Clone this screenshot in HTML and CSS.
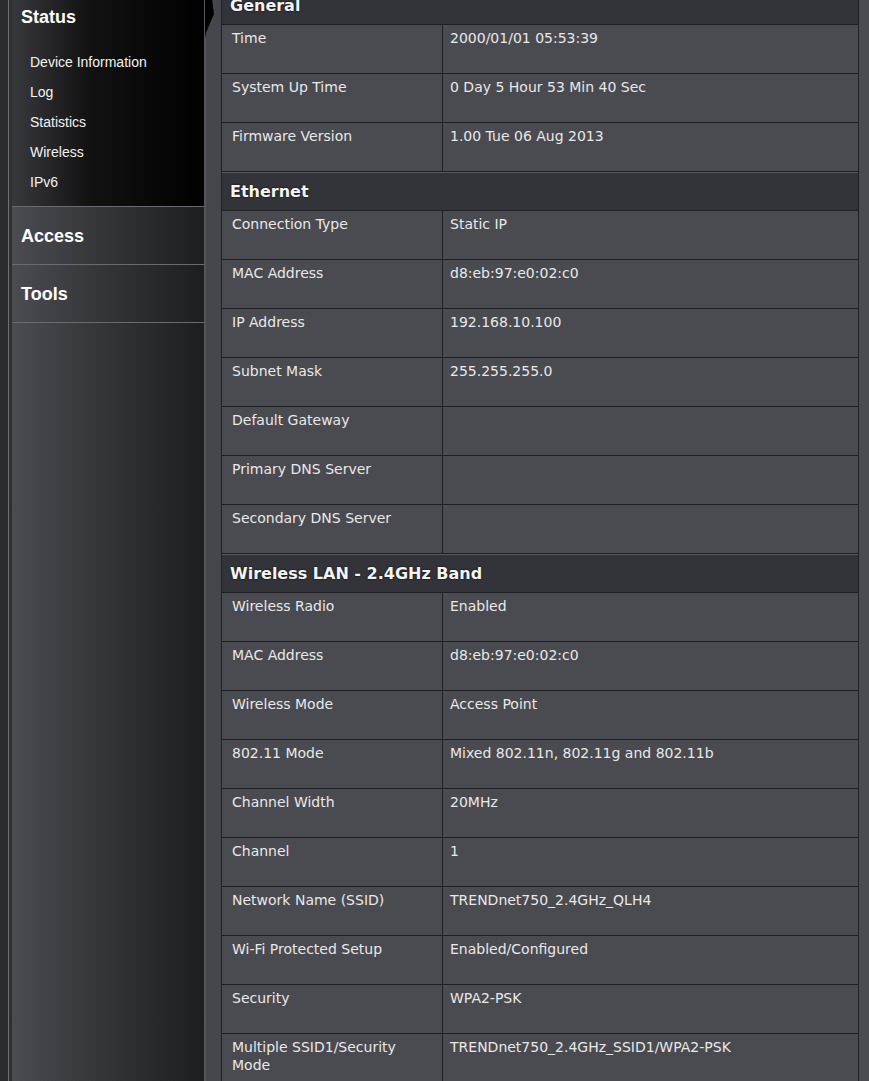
FILE: index.html
```html
<!DOCTYPE html>
<html lang="en-us">
<head>
    <meta charset="utf-8">
    <meta name="viewport" content="width=device-width">
    <title>Device Information</title>
    <link rel="stylesheet" href="styles.css">
</head>
<body>
    <div class="page">
        <div class="rail"></div>

        <div class="sidebar">
            <div class="menu-group active">
                <div class="menu-title">Status</div>
                <ul class="submenu">
                    <li>Device Information</li>
                    <li>Log</li>
                    <li>Statistics</li>
                    <li>Wireless</li>
                    <li>IPv6</li>
                </ul>
                <span class="pointer"></span>
            </div>
            <div class="menu-group">
                <div class="menu-title">Access</div>
            </div>
            <div class="menu-group">
                <div class="menu-title">Tools</div>
            </div>
        </div>

        <div class="content">
            <table class="info-table">
                <colgroup>
                    <col class="col-label">
                    <col class="col-value">
                </colgroup>
                <tr class="section"><th colspan="2">General</th></tr>
                <tr><td>Time</td><td>2000/01/01 05:53:39</td></tr>
                <tr><td>System Up Time</td><td>0 Day 5 Hour 53 Min 40 Sec</td></tr>
                <tr><td>Firmware Version</td><td>1.00 Tue 06 Aug 2013</td></tr>

                <tr class="section"><th colspan="2">Ethernet</th></tr>
                <tr><td>Connection Type</td><td>Static IP</td></tr>
                <tr><td>MAC Address</td><td>d8:eb:97:e0:02:c0</td></tr>
                <tr><td>IP Address</td><td>192.168.10.100</td></tr>
                <tr><td>Subnet Mask</td><td>255.255.255.0</td></tr>
                <tr><td>Default Gateway</td><td></td></tr>
                <tr><td>Primary DNS Server</td><td></td></tr>
                <tr><td>Secondary DNS Server</td><td></td></tr>

                <tr class="section"><th colspan="2">Wireless LAN - 2.4GHz Band</th></tr>
                <tr><td>Wireless Radio</td><td>Enabled</td></tr>
                <tr><td>MAC Address</td><td>d8:eb:97:e0:02:c0</td></tr>
                <tr><td>Wireless Mode</td><td>Access Point</td></tr>
                <tr><td>802.11 Mode</td><td>Mixed 802.11n, 802.11g and 802.11b</td></tr>
                <tr><td>Channel Width</td><td>20MHz</td></tr>
                <tr><td>Channel</td><td>1</td></tr>
                <tr><td>Network Name (SSID)</td><td>TRENDnet750_2.4GHz_QLH4</td></tr>
                <tr><td>Wi-Fi Protected Setup</td><td>Enabled/Configured</td></tr>
                <tr><td>Security</td><td>WPA2-PSK</td></tr>
                <tr><td>Multiple SSID1/Security Mode</td><td>TRENDnet750_2.4GHz_SSID1/WPA2-PSK</td></tr>
            </table>
        </div>
    </div>
</body>
</html>
```

FILE: styles.css
```css
body {
    margin: 0;
    background-color: #46474c;
    overflow: hidden;
}

.page {
    display: flex;
    margin-top: -13px;
    min-height: 1110px;
}

/* thin dark strip on the far left */
.rail {
    width: 8px;
    background-color: #2b2c30;
    border-right: 1px solid #707175;
}

.sidebar {
    width: 192px;
    border-left: 3px solid #2f3034;
    border-right: 2px solid #55565b;
    background: linear-gradient(to right, #4b4c51, #35363a 45%, #1d1e21);
    font-family: "Liberation Sans", Arial, sans-serif;
    color: #ffffff;
}

.menu-group {
    position: relative;
    height: 58px;
    border-bottom: 1px solid #6a6b6f;
    box-sizing: border-box;
}

.menu-group .menu-title {
    font-size: 18px;
    font-weight: bold;
    line-height: 58px;
    padding-left: 9px;
}

.menu-group.active {
    height: auto;
    padding: 18px 0 9px;
    background: linear-gradient(to right, #38393c, #121213 40%, #000000);
}

.menu-group.active .menu-title {
    line-height: 24px;
}

.submenu {
    list-style: none;
    margin: 18px 0 0;
    padding: 0 0 0 18px;
}

.submenu li {
    font-size: 14px;
    line-height: 30px;
    color: #f2f2f2;
}

/* arrow pointing at the open section */
.pointer {
    position: absolute;
    top: 0;
    right: -11px;
    width: 10px;
    height: 52px;
    background-color: #000000;
    clip-path: polygon(0 0, 55% 0, 90% 52%, 10% 88%, 0 100%);
}

.content {
    flex: 1;
    padding-left: 15px;
    background: linear-gradient(to right, #46474c 647px, #4b4c52 647px);
}

.info-table {
    width: 638px;
    margin-top: -2px;
    table-layout: fixed;
    border-collapse: collapse;
    font-family: "DejaVu Sans", Verdana, sans-serif;
    font-size: 14px;
    color: #e8e8e8;
}

.col-label {
    width: 221px;
}

.info-table td {
    height: 49px;
    box-sizing: border-box;
    padding: 4px 10px 0;
    vertical-align: top;
    line-height: 18px;
    background-color: #4a4b50;
    border: 1px solid #1f2023;
}

.info-table td + td {
    padding-left: 7px;
}

.section th {
    height: 38px;
    padding: 0 8px;
    text-align: left;
    font-size: 16px;
    font-weight: bold;
    color: #f4f4f4;
    text-shadow: 0 0 2px #000000;
    background-color: #333439;
    border: 1px solid #1f2023;
    box-shadow: inset 0 1px 0 #58595d;
}
```
